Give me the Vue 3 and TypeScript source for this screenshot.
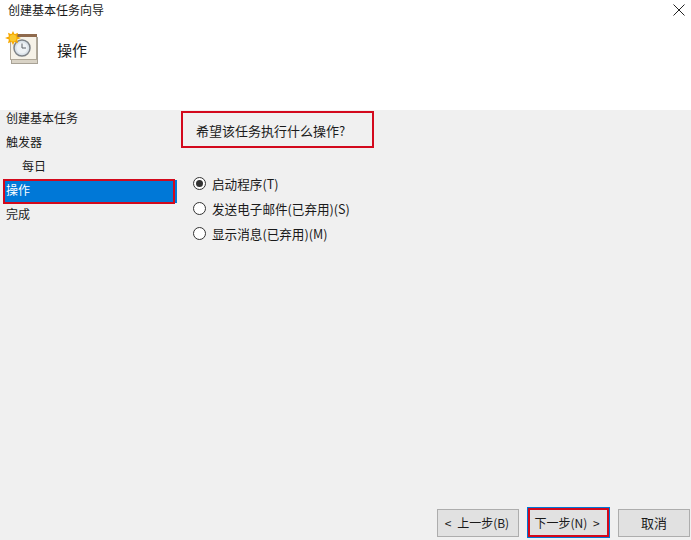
<script setup lang="ts">
const steps = [
  { label: '创建基本任务', sub: false, active: false },
  { label: '触发器', sub: false, active: false },
  { label: '每日', sub: true, active: false },
  { label: '操作', sub: false, active: true },
  { label: '完成', sub: false, active: false },
]
const options = [
  { label: '启动程序(T)', checked: true },
  { label: '发送电子邮件(已弃用)(S)', checked: false },
  { label: '显示消息(已弃用)(M)', checked: false },
]
</script>

<template>
  <div class="wizard">
    <header class="head">
      <div class="titlebar">
        <span class="title">创建基本任务向导</span>
        <svg class="close" width="12" height="12" viewBox="0 0 12 12">
          <path d="M.5.5l11 11M11.5.5l-11 11" stroke="#222" stroke-width="1" fill="none" />
        </svg>
      </div>
      <div class="banner">
        <svg class="logo" width="34" height="34" viewBox="0 0 34 34">
          <rect x="6.500" y="6.500" width="26" height="26" fill="#d9d3c6" stroke="#a8a296" />
          <rect x="5.500" y="3.500" width="26" height="25" fill="#f6f2e8" stroke="#b0a899" />
          <rect x="5" y="3" width="27" height="3" fill="#8f6a4d" />
          <circle cx="17" cy="17" r="8" fill="#dbe3ea" stroke="#7d8287" stroke-width="1.500" />
          <circle cx="17" cy="17" r="5.500" fill="#eef2f5" />
          <path d="M17 12.500V17h4" stroke="#5c6166" stroke-width="1" fill="none" />
          <path d="M8 0l1.600 3.300 3.400-1.600-.9 3.700L16 7l-3.900 1.600.9 3.700-3.400-1.600L8 14l-1.600-3.300-3.400 1.600.9-3.700L0 7l3.900-1.600L3 1.700l3.400 1.600z" fill="#f6a800" />
          <circle cx="8" cy="7" r="3.500" fill="#fbc92e" />
        </svg>
        <span class="banner-text">操作</span>
      </div>
    </header>
    <main class="body">
      <nav class="steps">
        <div v-for="s in steps" :key="s.label" class="step" :class="{ sub: s.sub, active: s.active }">{{ s.label }}</div>
      </nav>
      <section class="content">
        <h1 class="question">希望该任务执行什么操作?</h1>
        <div class="options">
          <label v-for="o in options" :key="o.label" class="option">
            <span class="radio" :class="{ checked: o.checked }"></span>
            <span>{{ o.label }}</span>
          </label>
        </div>
      </section>
    </main>
    <footer class="foot">
      <div class="btn prev">&lt; 上一步(B)</div>
      <div class="btn primary">下一步(N) &gt;</div>
      <div class="btn cancel">取消</div>
    </footer>
  </div>
</template>

<style>
html, body { margin: 0; background: #f0f0f0; }
</style>

<style scoped>
.wizard {
  width: 691px;
  height: 540px;
  display: flex;
  flex-direction: column;
  overflow: hidden;
  background: #f0f0f0;
  color: #1a1a1a;
  font-family: "Noto Sans CJK SC", "Liberation Sans", sans-serif;
  font-size: 12px;
}
.head { height: 110px; background: #fff; flex: none; }
.titlebar {
  height: 20px;
  display: flex;
  align-items: center;
  justify-content: space-between;
  padding: 0 6px 0 8px;
}
.title { line-height: 20px; }
.banner {
  display: flex;
  align-items: center;
  height: 34px;
  margin-top: 11px;
  padding-left: 5px;
}
.banner-text { font-size: 15px; margin: 3px 0 0 18px; }
.body { flex: 1; display: flex; min-height: 0; }
.steps { width: 176px; flex: none; margin-top: -4px; }
.step { height: 24px; line-height: 24px; padding-left: 6px; }
.step.sub { padding-left: 22px; }
.step.active {
  background: #0078d7;
  color: #fff;
  margin: 2px 0 -1px 4px;
  padding-left: 2px;
  height: 23px;
  line-height: 20px;
  outline: 2px solid #d3091c;
  outline-offset: -1px;
  box-shadow: 3px 0 0 #0078d7;
  width: 168px;
}
.content { flex: 1; padding: 1px 0 0 5px; }
.question {
  width: 193px;
  height: 37px;
  box-sizing: border-box;
  margin: 0;
  border: 2px solid #d3091c;
  font-size: 13px;
  font-weight: 400;
  line-height: 36px;
  padding-left: 13px;
}
.options {
  margin-top: 25px;
  padding-left: 12px;
  display: flex;
  flex-direction: column;
  gap: 5px;
  font-size: 12.6px;
}
.option { display: flex; align-items: center; height: 20px; gap: 6px; }
.radio {
  width: 13px;
  height: 13px;
  box-sizing: border-box;
  border: 1px solid #333;
  border-radius: 50%;
  background: #fff;
  display: inline-flex;
  align-items: center;
  justify-content: center;
}
.radio.checked::after {
  content: "";
  width: 7px;
  height: 7px;
  border-radius: 50%;
  background: #333;
}
.foot {
  flex: none;
  height: 31px;
  display: flex;
  justify-content: flex-end;
  gap: 9px;
  padding-right: 1px;
  box-sizing: border-box;
}
.btn {
  height: 28px;
  box-sizing: border-box;
  border: 1px solid #adadad;
  background: #e1e1e1;
  text-align: center;
  line-height: 26px;
  word-spacing: 3px;
}
.btn.prev { width: 82px; padding-right: 2px; }
.btn.primary {
  width: 81px;
  height: 29px;
  margin-top: -1px;
  padding-right: 3px;
  border: 2px solid #d3091c;
  box-shadow: 0 0 0 1px #0078d7;
  line-height: 25px;
}
.btn.cancel { width: 72px; font-size: 13px; }
</style>
